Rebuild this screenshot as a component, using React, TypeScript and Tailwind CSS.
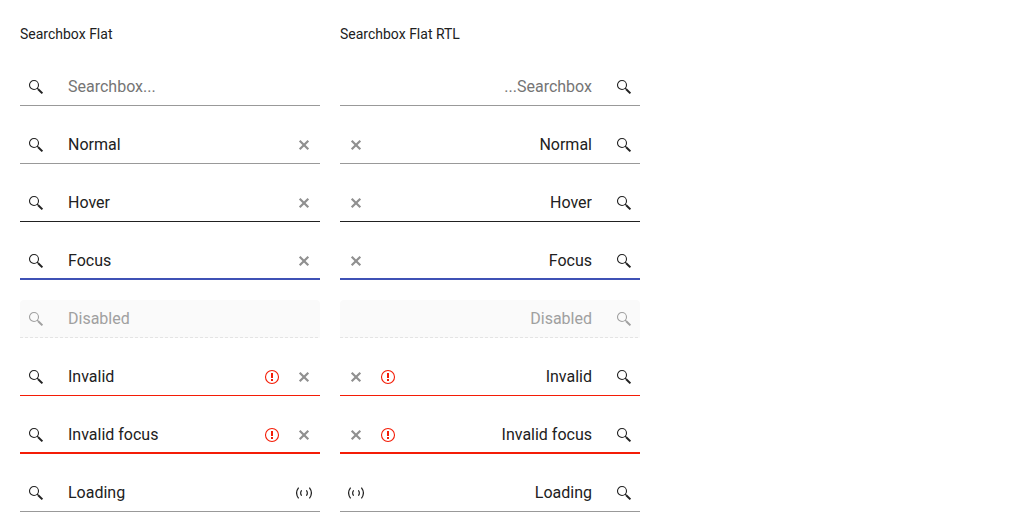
import React, { useState } from "react";

type State =
  | "placeholder"
  | "normal"
  | "hover"
  | "focus"
  | "disabled"
  | "invalid"
  | "invalidFocus"
  | "loading";

const rows: { state: State; value: string }[] = [
  { state: "placeholder", value: "" },
  { state: "normal", value: "Normal" },
  { state: "hover", value: "Hover" },
  { state: "focus", value: "Focus" },
  { state: "disabled", value: "Disabled" },
  { state: "invalid", value: "Invalid" },
  { state: "invalidFocus", value: "Invalid focus" },
  { state: "loading", value: "Loading" },
];

const lines: Record<State, string> = {
  placeholder: "border-b border-[#999999]",
  normal: "border-b border-[#999999]",
  hover: "border-b border-[#212121]",
  focus: "border-b-2 border-[#3f51b5]",
  disabled: "rounded-t bg-[#fafafa]",
  invalid: "border-b border-[#f41c06]",
  invalidFocus: "border-b-2 border-[#f41c06]",
  loading: "border-b border-[#999999]",
};

function SearchIcon() {
  return (
    <svg className="size-4" viewBox="0 0 16 16" fill="none" stroke="currentColor" aria-hidden="true">
      <circle cx="6" cy="6" r="4.5" strokeWidth="1.1" />
      <path d="M9 9l1.7 1.7" strokeWidth="1.2" />
      <path d="M10.2 10.2l4.2 4.2" strokeWidth="2" />
    </svg>
  );
}

function ClearIcon() {
  return (
    <svg className="size-4" viewBox="0 0 16 16" fill="none" stroke="currentColor" aria-hidden="true">
      <path d="M3.7 3.7l8.6 8.6M12.3 3.7l-8.6 8.6" strokeWidth="2.2" />
    </svg>
  );
}

function AlertIcon() {
  return (
    <svg className="size-4" viewBox="0 0 16 16" fill="none" stroke="currentColor" aria-hidden="true">
      <circle cx="8" cy="8" r="6.5" strokeWidth="1.1" />
      <path d="M8 4v5M8 10v2" strokeWidth="2" />
    </svg>
  );
}

function LoadingIcon() {
  return (
    <svg className="size-4" viewBox="0 0 16 16" fill="none" stroke="currentColor" aria-hidden="true">
      <path d="M2.6 2.6Q-1.4 8 2.6 13.4M13.4 2.6Q17.4 8 13.4 13.4" strokeWidth="1.2" />
      <path d="M5.6 5.2Q3.6 8 5.6 10.8M10.4 5.2Q12.4 8 10.4 10.8" strokeWidth="1.1" />
    </svg>
  );
}

function SearchBox({ state, initial }: { state: State; initial: string }) {
  const [value, setValue] = useState(initial);
  const disabled = state === "disabled";
  const invalid = state === "invalid" || state === "invalidFocus";
  const clearable = !disabled && state !== "placeholder" && state !== "loading";
  return (
    <div className={`relative flex h-[38px] ${lines[state]}`}>
      <div
        className={`flex h-[38px] w-full items-center ${disabled ? "text-[#a0a0a0]" : "text-[#212121]"}`}
      >
        <span className="flex w-8 shrink-0 justify-center">
          <SearchIcon />
        </span>
        <input
          type="search"
          aria-label={initial || "Searchbox"}
          aria-invalid={invalid}
          placeholder="Searchbox..."
          disabled={disabled}
          value={value}
          onChange={(e) => setValue(e.target.value)}
          className="h-9 min-w-0 flex-1 appearance-none bg-transparent px-4 pb-0.5 text-base outline-none placeholder:text-[#757575] [&::-webkit-search-cancel-button]:hidden"
        />
        {invalid && (
          <span className="flex w-8 shrink-0 justify-center text-[#f41c06]">
            <AlertIcon />
          </span>
        )}
        {clearable && (
          <button
            type="button"
            aria-label="Clear"
            onClick={() => setValue("")}
            className="flex w-8 shrink-0 justify-center text-[#909090]"
          >
            <ClearIcon />
          </button>
        )}
        {state === "loading" && (
          <span className="flex w-8 shrink-0 justify-center">
            <LoadingIcon />
          </span>
        )}
      </div>
      {disabled && (
        <svg className="absolute bottom-0 left-0 h-px w-full text-[#e4e4e4]" aria-hidden="true">
          <line x1="0" y1="0.5" x2="100%" y2="0.5" stroke="currentColor" strokeDasharray="3 2" />
        </svg>
      )}
    </div>
  );
}

function Column({ title, dir }: { title: string; dir: "ltr" | "rtl" }) {
  return (
    <section className="w-[300px]">
      <h2 className="mb-5 text-sm leading-7">{title}</h2>
      <div dir={dir} className="flex flex-col gap-5">
        {rows.map((row) => (
          <SearchBox key={row.state} state={row.state} initial={row.value} />
        ))}
      </div>
    </section>
  );
}

export default function App() {
  return (
    <main className="flex flex-wrap gap-5 bg-white px-5 pt-5 pb-5 font-['Roboto',sans-serif] text-[#212121]">
      <Column title="Searchbox Flat" dir="ltr" />
      <Column title="Searchbox Flat RTL" dir="rtl" />
    </main>
  );
}
